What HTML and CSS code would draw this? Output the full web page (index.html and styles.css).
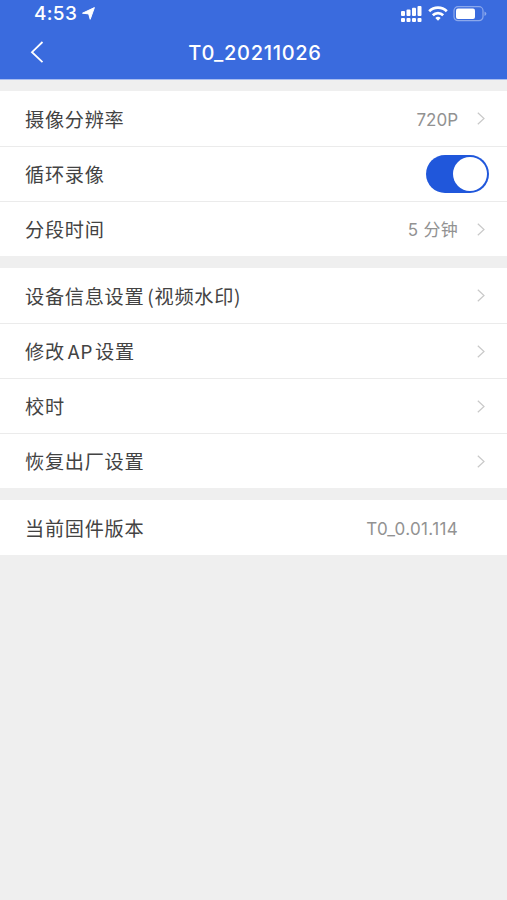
FILE: index.html
```html
<!DOCTYPE html>
<html lang="zh-CN">
<head>
<meta charset="utf-8">
<title>T0_20211026</title>
<link rel="stylesheet" href="styles.css">
</head>
<body>
<header class="header">
  <div class="status">
    <span class="time">4:53</span>
    <svg class="location" width="13" height="13" viewBox="0 0 13 13"><path d="M12.4.6 8.2 12.3 6.7 6.9.5 6.2Z" fill="#fff" stroke="#fff" stroke-width="1" stroke-linejoin="round"/></svg>
    <div class="indicators">
      <svg width="22" height="18" viewBox="0 0 22 18" fill="#fff"><rect x="1" y="6" width="4" height="5" rx="1"/><rect x="6.5" y="4.5" width="4" height="6.5" rx="1"/><rect x="12" y="2.8" width="4" height="8.2" rx="1"/><rect x="17.5" y="1" width="4" height="10" rx="1"/><rect x="1" y="13" width="4" height="4" rx="1"/><rect x="6.5" y="13" width="4" height="4" rx="1"/><rect x="12" y="13" width="4" height="4" rx="1"/><rect x="17.5" y="13" width="4" height="4" rx="1"/></svg>
      <svg class="wifi" width="20" height="18" viewBox="0 0 20 18" fill="none" stroke="#fff" stroke-width="2.7"><path d="M1.2 6.3a12.5 12.5 0 0 1 17.6 0M4.8 10.2a7.4 7.4 0 0 1 10.4 0"/><path d="M10 15.8 7.3 13a3.8 3.8 0 0 1 5.4 0Z" fill="#fff" stroke="none"/></svg>
      <svg class="battery" width="34" height="18" viewBox="0 0 34 18"><rect x="1" y="1.7" width="29" height="14" rx="4" fill="none" stroke="#8ba8ec" stroke-width="1.2"/><rect x="3" y="3.5" width="19" height="10.5" rx="2" fill="#fff"/><path d="M31.5 6.5v4.4q1.9-.7 1.9-2.2t-1.9-2.2" fill="#8ba8ec"/></svg>
    </div>
  </div>
  <nav class="nav">
    <svg class="back" width="14" height="24" viewBox="0 0 14 24"><path d="M12.5 2 2 12.2l10.5 10" fill="none" stroke="#fff" stroke-width="1.8"/></svg>
    <h1 class="title">T0_20211026</h1>
  </nav>
</header>
<main>
  <section class="group">
    <div class="row"><span class="label">摄像分辨率</span><span class="value">720P</span><svg class="arrow" viewBox="0 0 8 13"><path d="m.8.8 6.2 5.7-6.2 5.7"/></svg></div>
    <div class="row"><span class="label">循环录像</span><span class="switch"><span class="knob"></span></span></div>
    <div class="row"><span class="label">分段时间</span><span class="value minutes">5 分钟</span><svg class="arrow" viewBox="0 0 8 13"><path d="m.8.8 6.2 5.7-6.2 5.7"/></svg></div>
  </section>
  <section class="group">
    <div class="row"><span class="label">设备信息设置<span class="paren">(</span>视频水印)</span><svg class="arrow" viewBox="0 0 8 13"><path d="m.8.8 6.2 5.7-6.2 5.7"/></svg></div>
    <div class="row"><span class="label">修改<span class="ap">AP</span>设置</span><svg class="arrow" viewBox="0 0 8 13"><path d="m.8.8 6.2 5.7-6.2 5.7"/></svg></div>
    <div class="row"><span class="label">校时</span><svg class="arrow" viewBox="0 0 8 13"><path d="m.8.8 6.2 5.7-6.2 5.7"/></svg></div>
    <div class="row"><span class="label">恢复出厂设置</span><svg class="arrow" viewBox="0 0 8 13"><path d="m.8.8 6.2 5.7-6.2 5.7"/></svg></div>
  </section>
  <section class="group">
    <div class="row"><span class="label">当前固件版本</span><span class="value version">T0_0.01.114</span></div>
  </section>
</main>
</body>
</html>
```
FILE: styles.css
```css
* { box-sizing: border-box; }
body {
  margin: 0;
  min-height: 100vh;
  background: #efefef;
  font-family: Inter, "Noto Sans CJK SC", sans-serif;
}
svg { display: block; flex: none; }
.header {
  height: 80px;
  background: #3a6bde;
  border-bottom: 1px solid #a9bdf0;
  color: #fff;
}
.status {
  display: flex;
  align-items: center;
  height: 27px;
  padding: 0 20px 0 34px;
}
.time {
  width: 48px;
  font-size: 19px;
  font-weight: 500;
  letter-spacing: .3px;
  line-height: 27px;
  white-space: nowrap;
}
.indicators { display: flex; margin-left: auto; margin-top: 1px; }
.wifi { margin-left: 6px; }
.battery { margin-left: 5px; }
.nav {
  display: grid;
  grid-template-columns: 60px 1fr 60px;
  align-items: center;
  height: 50px;
}
.back { margin-left: 30px; }
.title {
  grid-column: 2;
  margin: 0;
  padding: 2px 0 0 3px;
  text-align: center;
  font-size: 20px;
  font-weight: 500;
  letter-spacing: .7px;
  line-height: 24px;
}
.group { margin-top: 12px; background: #fff; }
.group:first-child { margin-top: 11px; }
.row {
  display: flex;
  align-items: center;
  height: 55px;
  padding: 0 22px 0 25px;
}
.row + .row { border-top: 1px solid #ebebeb; }
.label {
  font-family: "Noto Sans CJK SC", sans-serif;
  font-size: 19.2px;
  letter-spacing: .7px;
  line-height: 28px;
  color: #434343;
  white-space: nowrap;
}
.paren { margin-left: 3px; }
.ap { margin: 0 2px 0 3px; }
.value {
  margin-left: auto;
  padding-top: 2px;
  color: #929292;
  font-size: 17px;
  line-height: 24px;
  white-space: nowrap;
}
.minutes { letter-spacing: .3px; }
.version { margin-right: 27px; padding-top: 3px; letter-spacing: .35px; }
.arrow {
  width: 8px;
  height: 13px;
  margin-left: auto;
  fill: none;
  stroke: #c9c9c9;
  stroke-width: 1.2;
}
.value + .arrow { margin-left: 19px; }
.switch {
  display: flex;
  justify-content: flex-end;
  width: 63px;
  height: 38px;
  margin-left: auto;
  margin-right: -4px;
  padding: 2px;
  border-radius: 19px;
  background: #2057db;
}
.knob {
  width: 34px;
  height: 34px;
  border-radius: 50%;
  background: #fff;
}
```
